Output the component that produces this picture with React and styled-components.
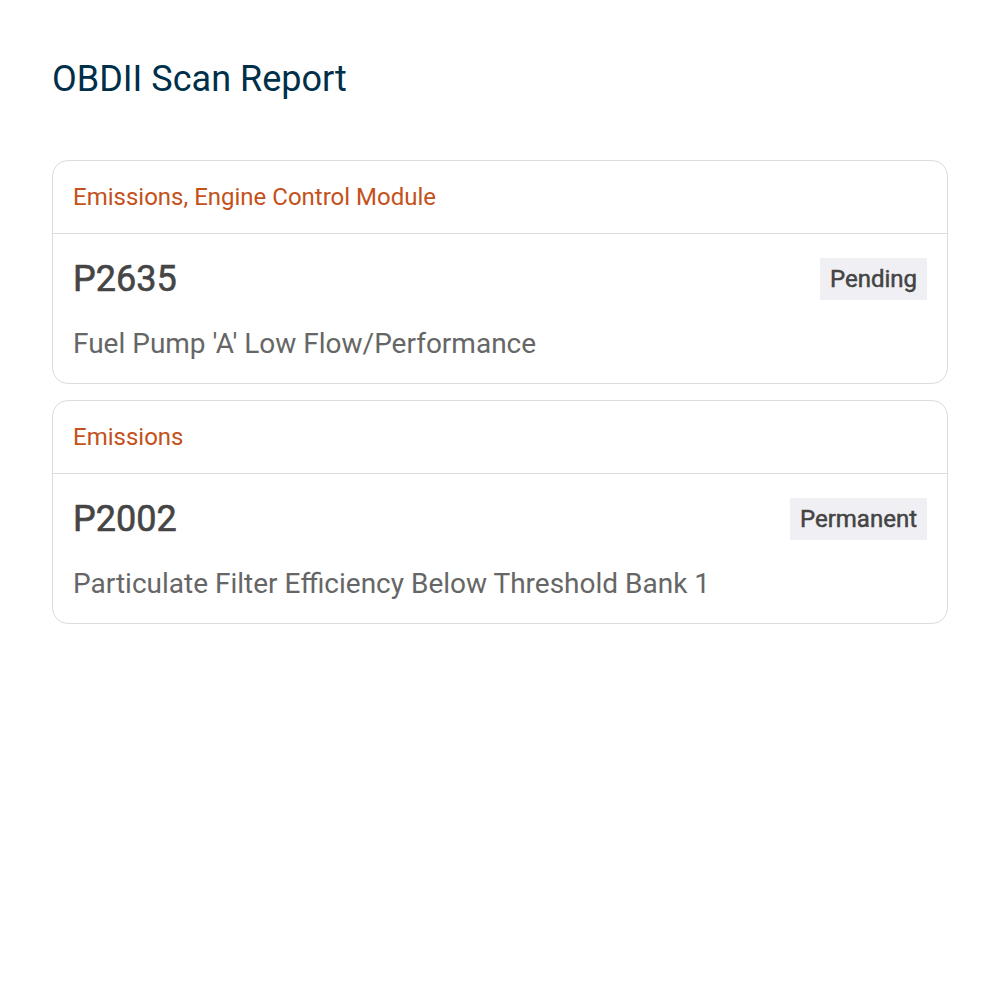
import React from 'react'
import styled, { createGlobalStyle } from 'styled-components'

const GlobalStyle = createGlobalStyle`
body {
    margin: 0;
    background: #fff;
    font-family: Roboto, "Noto Sans", sans-serif;
}
`

const codes = [
    { system: 'Emissions, Engine Control Module', code: 'P2635', status: 'Pending', text: "Fuel Pump 'A' Low Flow/Performance" },
    { system: 'Emissions', code: 'P2002', status: 'Permanent', text: 'Particulate Filter Efficiency Below Threshold Bank 1' },
]

export default function App() {
    return (
        <Page>
            <GlobalStyle />
            <Title>OBDII Scan Report</Title>
            <List>
                {codes.map((c) => (
                    <Card key={c.code}>
                        <Header>{c.system}</Header>
                        <Body>
                            <CodeRow>
                                <Code>{c.code}</Code>
                                <Badge>{c.status}</Badge>
                            </CodeRow>
                            <Description>{c.text}</Description>
                        </Body>
                    </Card>
                ))}
            </List>
        </Page>
    )
}

const Page = styled.div`
padding: 55px 52px;
`
const Title = styled.h1`
margin: 0 0 57px;
font-size: 36px;
font-weight: 400;
line-height: 48px;
color: #003049;
`
const List = styled.div`
display: flex;
flex-direction: column;
gap: 16px;
`
const Card = styled.div`
border: 1px solid #dcdcdc;
border-radius: 16px;
overflow: hidden;
`
const Header = styled.div`
padding: 20px 20px;
font-size: 24px;
line-height: 32px;
color: #c4511a;
border-bottom: 1px solid #dcdcdc;
`
const Body = styled.div`
padding: 24px 20px 21px;
display: flex;
flex-direction: column;
gap: 26px;
`
const CodeRow = styled.div`
display: flex;
justify-content: space-between;
align-items: center;
`
// only regular and bold are installed, so medium is faked with a thin stroke
const Code = styled.div`
font-size: 36px;
font-weight: 400;
-webkit-text-stroke: 0.6px currentColor;
color: #454545;
`
const Badge = styled.span`
background: #f0f0f4;
color: #444;
font-size: 24px;
font-weight: 400;
-webkit-text-stroke: 0.5px currentColor;
line-height: 42px;
padding: 0 10px;
`
const Description = styled.div`
font-size: 28px;
line-height: 36px;
color: #666;
`
